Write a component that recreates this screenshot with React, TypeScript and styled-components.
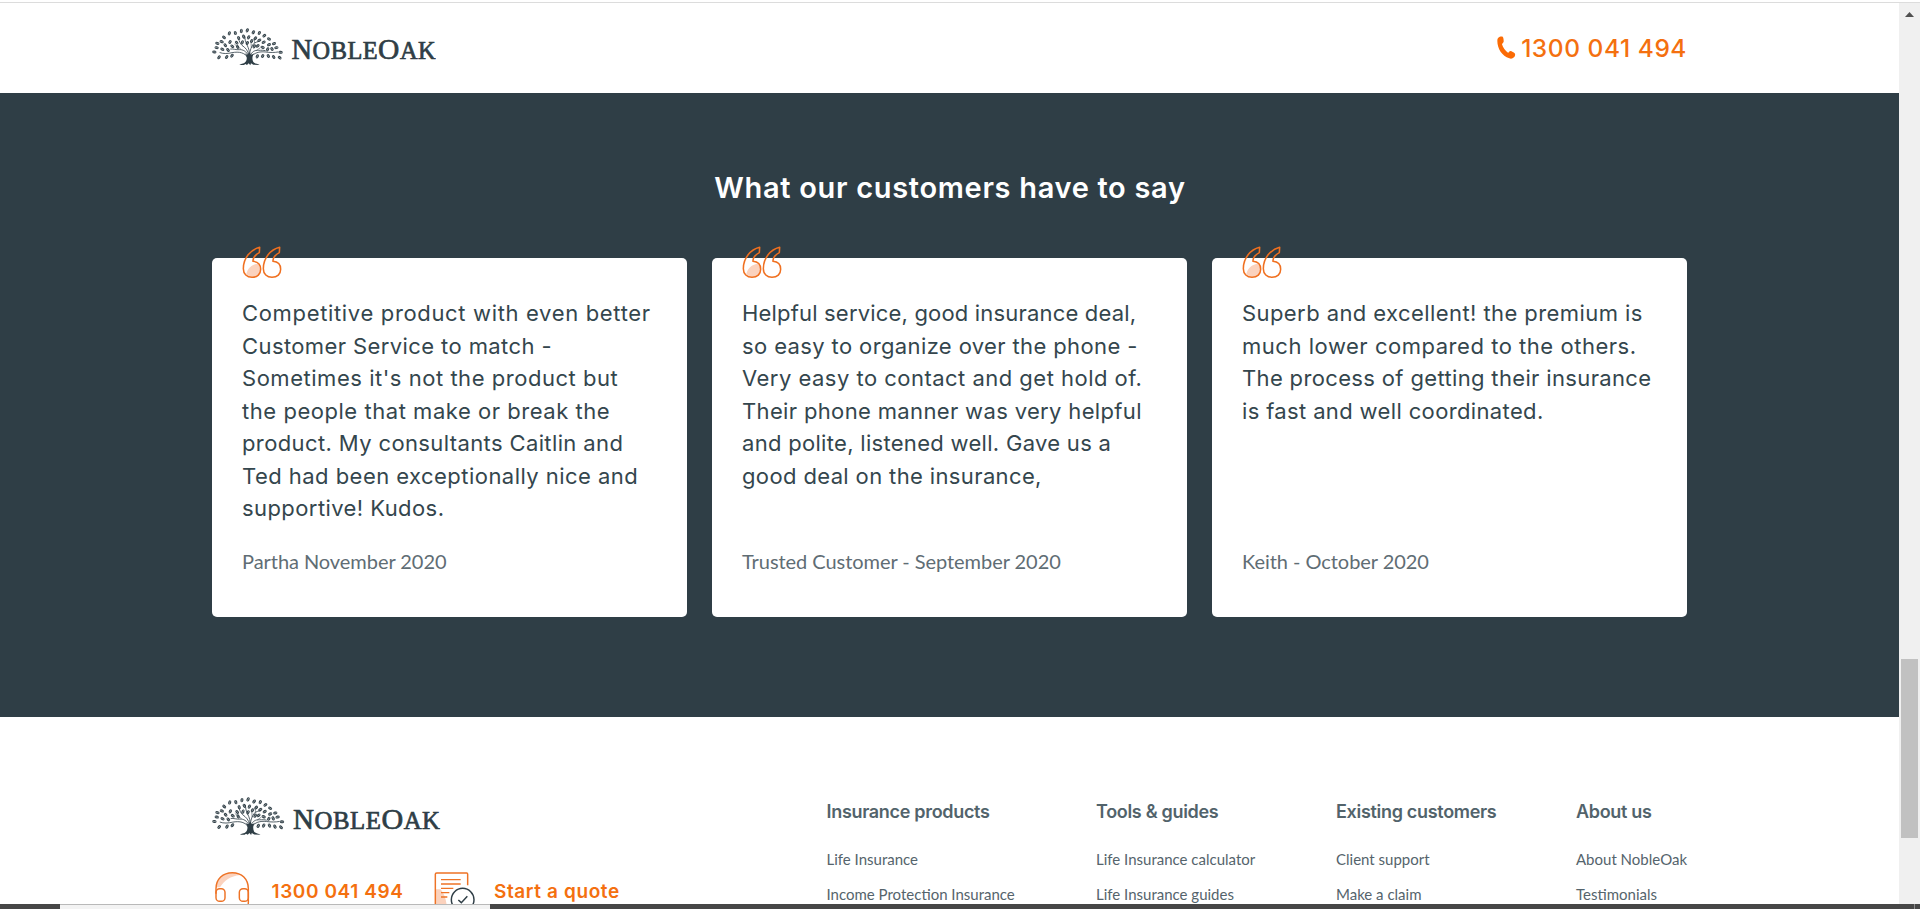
import React from 'react';
import styled, { createGlobalStyle } from 'styled-components';

const orange = '#f4700f';
const slate = '#2f3e46';
const display = `Inter, 'Liberation Sans', sans-serif`;
const text = `Lato, 'Liberation Sans', sans-serif`;

const GlobalStyle = createGlobalStyle`
  * { box-sizing: border-box; }
  body { margin: 0; background: #fff; overflow: hidden; }
  h2, h3, p, ul { margin: 0; padding: 0; }
  svg { display: block; flex: none; }
`;

const Window = styled.div`
  display: flex;
  flex-direction: column;
  width: 1920px;
  height: 909px;
  overflow: hidden;
  padding-top: 2px;
`;

const Viewport = styled.div`
  display: flex;
  flex: 1;
  min-height: 0;
  border-top: 1px solid #dcdcdc;
`;

const Page = styled.div`
  width: 1899px;
  overflow: hidden;
`;

const Container = styled.div`
  width: 1475px;
  margin-left: 212px;
`;

const Header = styled.header`
  height: 90px;
  background: #fff;
`;

const HeaderInner = styled(Container)`
  display: flex;
  align-items: center;
  justify-content: space-between;
  height: 90px;
`;

const HeaderLogo = styled.div`
  margin-bottom: 2px;
`;

const PhoneLink = styled.a`
  display: flex;
  align-items: center;
  gap: 5px;
  color: ${orange};
  font: 500 24.5px/30px ${display};
  letter-spacing: 0.55px;
  white-space: nowrap;
`;

const Testimonials = styled.section`
  height: 623.5px;
  padding-top: 77px;
  background: ${slate};
`;

const SectionTitle = styled.h2`
  width: 1900px;
  color: #fff;
  font: 600 29px/36px ${display};
  letter-spacing: 0.68px;
  text-align: center;
`;

const Cards = styled(Container)`
  display: grid;
  grid-template-columns: repeat(3, 475px);
  gap: 25px;
  margin-top: 52px;
`;

const Card = styled.article`
  position: relative;
  display: flex;
  flex-direction: column;
  height: 359px;
  padding: 39px 30px 44.5px;
  border-radius: 5px;
  background: #fff;
`;

const QuoteBadge = styled.div`
  position: absolute;
  left: 29.6px;
  top: -11.6px;
`;

const QuoteLine = styled.span<{ $tracking: number }>`
  display: block;
  color: #34464d;
  font: 400 22px/32.5px ${display};
  letter-spacing: ${(p) => p.$tracking}px;
  white-space: nowrap;
`;

const Author = styled.p`
  margin-top: auto;
  color: #5f6d74;
  font: 400 20px/24px ${text};
  letter-spacing: -0.05px;
`;

const Footer = styled.footer`
  height: 200px;
`;

const FooterInner = styled(Container)`
  display: flex;
  justify-content: space-between;
  padding-top: 79px;
`;

const ContactRow = styled.div`
  display: flex;
  margin-top: 35px;
`;

const Contact = styled.a<{ $width: number; $gap: number; $tracking: number }>`
  display: flex;
  gap: ${(p) => p.$gap}px;
  width: ${(p) => p.$width}px;
  color: ${orange};
  font: 600 19px/24px ${display};
  letter-spacing: ${(p) => p.$tracking}px;
  white-space: nowrap;

  span {
    padding-top: 9px;
  }
`;

const LinkColumns = styled.nav`
  display: grid;
  grid-template-columns: 269.5px 240px 240px 111px;
  padding-top: 5px;
`;

const ColumnTitle = styled.h3`
  margin-bottom: 26px;
  color: #52636b;
  font: 600 18px/22px ${display};
  letter-spacing: -0.31px;
  white-space: nowrap;
`;

const LinkList = styled.ul`
  display: flex;
  flex-direction: column;
  gap: 15px;
  list-style: none;
  color: #55646c;
  font: 400 15px/20px ${text};
  white-space: nowrap;
`;

const ScrollTrack = styled.div`
  width: 21px;
  padding: 9px 2px 0;
  background: #f0f0f0;
`;

const ScrollThumb = styled.div`
  width: 17px;
  height: 179px;
  margin-top: 642px;
  background: #c1c1c1;
`;

const ScrollArrow = styled.svg`
  margin-left: 4px;
`;

const BottomBar = styled.div`
  display: flex;
  flex: none;
  height: 5px;
  padding-left: 60px;
  background: #474747;
`;

const BottomTab = styled.div`
  width: 430px;
  border-top: 1px solid #b9b9b9;
  background: #f3f3f3;
`;

const BottomMark = styled.div`
  width: 1px;
  margin-left: 1424px;
  background: #8b8b8b;
`;

const leaves: [number, number, number][] = [
  [142, 91, -60], [124, 93, -80], [106, 99, 75], [88, 100, -70], [160, 97, -55], [178, 99, -65],
  [193, 107, -40], [207, 117, 30], [72, 112, 40], [65, 125, 20], [52, 130, 15], [50, 143, 10],
  [43, 156, 5], [57, 172, -50], [80, 171, -55], [96, 167, -50], [76, 136, 50], [90, 126, -60],
  [110, 128, 50], [97, 139, 35], [131, 110, 60], [146, 112, -60], [116, 114, 70], [127, 127, -70],
  [142, 129, -60], [155, 123, -60], [166, 115, -50], [178, 121, -30], [191, 127, -30], [207, 134, -20],
  [222, 131, -15], [229, 143, -10], [242, 157, 5], [239, 173, 40], [221, 171, 55], [205, 168, 60],
  [188, 168, -60], [172, 169, -60], [203, 148, -60], [216, 147, 60], [173, 138, -40], [188, 142, 20],
  [67, 148, 30], [84, 150, 50], [113, 141, 60], [163, 139, -60],
];

const Logo = ({ width }: { width: number }) => (
  <svg width={width} height={(width * 40) / 224} viewBox="0 0 224 40" fill={slate}>
    <g transform="translate(-12 -27) scale(0.3333)">
      {leaves.map(([x, y, r]) => (
        <g key={`${x}-${y}`} transform={`rotate(${r} ${x} ${y})`}>
          <ellipse cx={x} cy={y} rx="6.4" ry="4.4" />
          <path d={`M${x - 5} ${y}H${x + 5}`} stroke="#fff" strokeWidth="1.1" />
        </g>
      ))}
      <g fill="none" stroke={slate} strokeLinecap="round" strokeWidth="2.4">
        <path d="M143 172C134 158 118 154 96 158C84 161 70 162 60 158" />
        <path d="M152 172C162 158 178 154 196 156C210 158 224 158 234 156" />
        <path d="M144 166C140 154 128 148 118 149C108 150 100 146 92 147" />
        <path d="M151 166C156 155 164 150 176 151C184 151 190 150 196 152" />
        <path d="M146 165C145 152 136 143 126 136C120 130 118 124 116 118" />
        <path d="M149 165C149 150 155 140 160 132C166 126 172 126 178 124" />
        <path d="M148 160C149 146 141 138 136 122L134 108" />
        <path d="M154 142L153 126M122 147L104 133M170 151L180 144M164 129L163 118" strokeWidth="1.6" />
      </g>
      <path d="M134 160C143 166 145 164 146 158L150 158C151 164 154 166 162 160C156 169 156 178 160 186C165 192 173 190 179 195L160 194L153 190L151 196L146 190L141 195L136 192L132 195L118 195C125 190 133 192 138 184C142 176 141 168 134 160Z" />
    </g>
    <text
      x="79.5"
      y="32"
      fontFamily="'Liberation Serif', serif"
      fontSize="24.3"
      textLength="144"
      stroke={slate}
      strokeWidth="0.7"
    >
      <tspan fontSize="28.5">N</tspan>OBLE<tspan fontSize="29.5">O</tspan>AK
    </text>
  </svg>
);

const mark = 'M177 54C150 61 128 85 128 118C128 134 139 144 154 144C170 144 180 134 180 120C180 106 172 97 157 96C156 84 163 77 176 70Z';

const QuoteIcon = () => (
  <svg width="40" height="32.67" viewBox="124 50 120 98" fill="none">
    <path d="M137 134C140 116 156 104 172 103C181 112 180 124 176 132C167 145 149 146 137 134Z" fill="#fbd2bd" />
    <path d={mark} stroke="#f07020" strokeWidth="4.6" strokeLinejoin="round" />
    <path d={mark} transform="translate(60 0)" stroke="#f07020" strokeWidth="4.6" strokeLinejoin="round" />
  </svg>
);

const HandsetIcon = () => (
  <svg width="19" height="24" viewBox="51 109 57 72" fill="#fb6b05">
    <path d="M55 114C58 111 64 110 68 111C71 115 71 121 71 126C70 130 66 131 66 134C69 145 76 153 84 159C87 159 88 154 91 154C96 155 101 158 104 161C107 165 105 170 102 173C98 177 93 178 88 176C66 169 52 147 52 124C52 120 52 117 55 114Z" />
  </svg>
);

const HeadsetIcon = () => (
  <svg width="40" height="40" viewBox="36 277 120 120" fill="none" stroke="#ee7326" strokeWidth="4.4">
    <path d="M50 326C50 300 72 283 97 283C108 283 115 285 120 289C92 292 72 306 60 326Z" fill="#fbd2bd" stroke="none" />
    <path d="M48 345V330C48 301 69 282 97 282C125 282 145 301 145 330V372C145 380 140 385 130 385" />
    <rect x="48" y="330" width="27" height="38" rx="11" />
    <rect x="118" y="330" width="27" height="38" rx="11" />
  </svg>
);

const QuoteFormIcon = () => (
  <svg width="42" height="40" viewBox="702 277 126 120" fill="none" stroke="#ee7326" strokeWidth="4.4">
    <path d="M707 332H722C732 345 738 360 740 380H707Z" fill="#fbd2bd" stroke="none" />
    <path d="M706 390V287Q706 283 710 283H800Q803 283 803 287V320" />
    <path d="M723 303H782M723 316H782M723 329H760M723 342H748M723 355H742" strokeWidth="3.8" />
    <circle cx="788" cy="363" r="34" stroke={slate} fill="#fff" />
    <path d="M775 364L784 372L802 353" stroke={slate} />
  </svg>
);

type Line = [string, number];
const reviews: { lines: Line[]; author: string }[] = [
  {
    lines: [
      ['Competitive product with even better', 0.66],
      ['Customer Service to match -', 0.4],
      ["Sometimes it's not the product but", 0.53],
      ['the people that make or break the', 0.54],
      ['product. My consultants Caitlin and', 0.38],
      ['Ted had been exceptionally nice and', 0.46],
      ['supportive! Kudos.', 0.42],
    ],
    author: 'Partha November 2020',
  },
  {
    lines: [
      ['Helpful service, good insurance deal,', 0.18],
      ['so easy to organize over the phone -', 0.38],
      ['Very easy to contact and get hold of.', 0.48],
      ['Their phone manner was very helpful', 0.35],
      ['and polite, listened well. Gave us a', 0.3],
      ['good deal on the insurance,', 0.37],
    ],
    author: 'Trusted Customer - September 2020',
  },
  {
    lines: [
      ['Superb and excellent! the premium is', 0.42],
      ['much lower compared to the others.', 0.53],
      ['The process of getting their insurance', 0.35],
      ['is fast and well coordinated.', 0.36],
    ],
    author: 'Keith - October 2020',
  },
];

const columns = [
  { title: 'Insurance products', links: ['Life Insurance', 'Income Protection Insurance'] },
  { title: 'Tools & guides', links: ['Life Insurance calculator', 'Life Insurance guides'] },
  { title: 'Existing customers', links: ['Client support', 'Make a claim'] },
  { title: 'About us', links: ['About NobleOak', 'Testimonials'] },
];

export default function App() {
  return (
    <Window>
      <GlobalStyle />
      <Viewport>
        <Page>
          <Header>
            <HeaderInner>
              <HeaderLogo>
                <Logo width={224} />
              </HeaderLogo>
              <PhoneLink>
                <HandsetIcon />
                1300 041 494
              </PhoneLink>
            </HeaderInner>
          </Header>
          <Testimonials>
            <SectionTitle>What our customers have to say</SectionTitle>
            <Cards>
              {reviews.map((review) => (
                <Card key={review.author}>
                  <QuoteBadge>
                    <QuoteIcon />
                  </QuoteBadge>
                  <p>
                    {review.lines.map(([line, tracking]) => (
                      <QuoteLine key={line} $tracking={tracking}>
                        {line}
                      </QuoteLine>
                    ))}
                  </p>
                  <Author>{review.author}</Author>
                </Card>
              ))}
            </Cards>
          </Testimonials>
          <Footer>
            <FooterInner>
              <div>
                <Logo width={228.5} />
                <ContactRow>
                  <Contact $width={222} $gap={19.5} $tracking={0.6}>
                    <HeadsetIcon />
                    <span>1300 041 494</span>
                  </Contact>
                  <Contact $width={190} $gap={18} $tracking={0.6}>
                    <QuoteFormIcon />
                    <span>Start a quote</span>
                  </Contact>
                </ContactRow>
              </div>
              <LinkColumns>
                {columns.map((column) => (
                  <div key={column.title}>
                    <ColumnTitle>{column.title}</ColumnTitle>
                    <LinkList>
                      {column.links.map((link) => (
                        <li key={link}>{link}</li>
                      ))}
                    </LinkList>
                  </div>
                ))}
              </LinkColumns>
            </FooterInner>
          </Footer>
        </Page>
        <ScrollTrack>
          <ScrollArrow width="9" height="5" viewBox="0 0 9 5" fill="#505050">
            <path d="M4.5 0L9 5H0Z" />
          </ScrollArrow>
          <ScrollThumb />
        </ScrollTrack>
      </Viewport>
      <BottomBar>
        <BottomTab />
        <BottomMark />
      </BottomBar>
    </Window>
  );
}
